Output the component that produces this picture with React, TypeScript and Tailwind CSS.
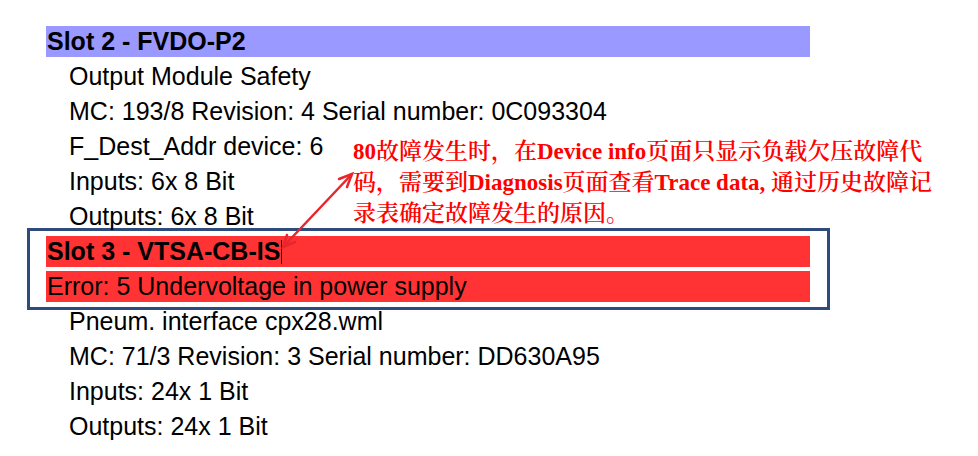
const topRows = [
  'Output Module Safety',
  'MC: 193/8 Revision: 4 Serial number: 0C093304',
  'F_Dest_Addr device: 6',
  'Inputs: 6x 8 Bit',
  'Outputs: 6x 8 Bit',
];

const bottomRows = [
  'Pneum. interface cpx28.wml',
  'MC: 71/3 Revision: 3 Serial number: DD630A95',
  'Inputs: 24x 1 Bit',
  'Outputs: 24x 1 Bit',
];

function Line({ text }: { text: string }) {
  return (
    <div className="h-[35px] flex items-center pl-[23px] whitespace-nowrap">{text}</div>
  );
}

function Bar({ color, bold, children }: { color: string; bold?: boolean; children: React.ReactNode }) {
  return (
    <div className="h-[35px] flex items-center">
      <div className={`h-[31px] w-[764px] flex items-center px-px whitespace-nowrap ${color} ${bold ? 'font-bold' : ''}`}>
        {children}
      </div>
    </div>
  );
}

export default function App() {
  return (
    <div className="relative w-[978px] h-[456px] overflow-hidden bg-white text-black text-[25px] font-['Liberation_Sans',Arial,sans-serif]">
      <div className="pt-[24px] pl-[46px]">
        <Bar color="bg-[#9999ff]" bold>
          Slot 2 - FVDO-P2
        </Bar>
        {topRows.map((t) => (
          <Line key={t} text={t} />
        ))}

        {/* highlighted fault block */}
        <div className="-my-[6px] -ml-[19px] w-[803px] border-[3px] border-[#2f4b7c] py-[3px] pl-[16px]">
          <Bar color="bg-[#ff3333]" bold>
            Slot 3 - VTSA-CB-IS
            <span className="ml-px inline-block w-px h-[24px] bg-black" />
          </Bar>
          <Bar color="bg-[#ff3333]">Error: 5 Undervoltage in power supply</Bar>
        </div>

        {bottomRows.map((t) => (
          <Line key={t} text={t} />
        ))}
      </div>

      {/* annotation */}
      <div className="absolute left-[353px] top-[136px] text-[23px] leading-[31px] font-semibold text-[#ff0000] whitespace-nowrap font-['Liberation_Serif','Noto_Serif_CJK_SC','Noto_Sans_CJK_SC',serif]">
        <div>
          <b>80</b>故障发生时，在<b>Device info</b>页面只显示负载欠压故障代
        </div>
        <div>
          码，需要到<b>Diagnosis</b>页面查看<b>Trace data, </b>通过历史故障记
        </div>
        <div>录表确定故障发生的原因。</div>
      </div>

      <svg className="absolute inset-0 pointer-events-none" width="978" height="456">
        <g stroke="#e8262b" strokeWidth="2.5" fill="none" strokeLinecap="round">
          <line x1="283" y1="247" x2="352" y2="174" />
          <polyline points="339,179 352,174 347,187" />
          <polyline points="295,242 283,247 287,235" />
        </g>
      </svg>
    </div>
  );
}
